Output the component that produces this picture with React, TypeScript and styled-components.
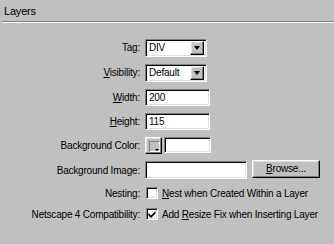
import React from "react";
import styled, { createGlobalStyle } from "styled-components";

const GlobalStyle = createGlobalStyle`
  html, body {
    margin: 0;
    padding: 0;
    background: #c0c0c0;
  }
  body {
    font-family: "Liberation Sans", Arial, sans-serif;
    font-size: 10px;
    letter-spacing: -0.2px;
    color: #000;
  }
`;

const Panel = styled.div`
  width: 334px;
  height: 244px;
  background: #c0c0c0;
  overflow: hidden;
`;

const Header = styled.div`
  height: 21px;
  padding-left: 4px;
  display: flex;
  align-items: center;
  font-size: 11px;
`;

const Divider = styled.div`
  margin-left: 2px;
  height: 1px;
  background: #808080;
  border-bottom: 1px solid #fff;
`;

const Form = styled.div`
  margin-top: 12px;
  display: grid;
  grid-template-columns: 140px 1fr;
  grid-template-rows: 25px 25px 24px 24px 24px 26px 20px 22px;
  column-gap: 5px;
  align-items: center;
`;

const Label = styled.div`
  text-align: right;
  white-space: nowrap;
`;

const Controls = styled.div<{ $gap?: number }>`
  display: flex;
  align-items: center;
  gap: ${({ $gap }) => $gap ?? 2}px;
`;

const sunken = `
  box-sizing: border-box;
  background: #fff;
  border: 1px solid;
  border-color: #808080 #fff #fff #808080;
  box-shadow: inset 1px 1px #000, inset -1px -1px #dfdfdf;
`;

const raised = `
  box-sizing: border-box;
  background: #c0c0c0;
  border: 1px solid;
  border-color: #fff #000 #000 #fff;
  box-shadow: inset -1px -1px #808080, inset 1px 1px #dfdfdf;
`;

const SelectBox = styled.div`
  ${sunken}
  width: 62px;
  height: 18px;
  display: flex;
  align-items: center;
  padding: 2px;
`;

const SelectText = styled.span`
  flex: 1;
  padding-left: 1px;
  white-space: nowrap;
  overflow: hidden;
`;

const ArrowButton = styled.div`
  ${raised}
  width: 14px;
  height: 14px;
  display: flex;
  align-items: center;
  justify-content: center;
`;

const Arrow = styled.div`
  width: 0;
  height: 0;
  border-left: 3.5px solid transparent;
  border-right: 3.5px solid transparent;
  border-top: 4px solid #000;
`;

const Field = styled.div<{ $w: number; $h: number }>`
  ${sunken}
  width: ${({ $w }) => $w}px;
  height: ${({ $h }) => $h}px;
  display: flex;
  align-items: center;
  padding-left: 3px;
`;

const Swatch = styled.div`
  ${raised}
  width: 17px;
  height: 17px;
  position: relative;
`;

const SwatchInner = styled.div`
  position: absolute;
  left: 3px;
  top: 3px;
  width: 9px;
  height: 9px;
  border: 1px solid #808080;
  border-right-color: #fff;
  border-bottom-color: #fff;
  background: #c0c0c0;
`;

const SwatchArrow = styled.div`
  position: absolute;
  right: 2px;
  bottom: 2px;
  width: 0;
  height: 0;
  border-left: 2px solid transparent;
  border-right: 2px solid transparent;
  border-top: 2px solid #000;
`;

const Button = styled.div`
  ${raised}
  width: 68px;
  height: 18px;
  display: flex;
  align-items: center;
  justify-content: center;
  margin-left: 3px;
  margin-top: -3px;
`;

const Check = styled.div`
  ${sunken}
  width: 12px;
  height: 12px;
  margin-left: 1px;
  display: flex;
  align-items: center;
  justify-content: center;
`;

const CheckLabel = styled.span`
  margin-left: 4px;
  white-space: nowrap;
`;

const U = styled.span`
  text-decoration: underline;
`;

const CheckMark = () => (
  <svg width="8" height="8" viewBox="0 0 8 8">
    <path d="M0.5 3 L3 5.5 L7.5 1 L7.5 3.5 L3 8 L0.5 5.5 Z" fill="#000" />
  </svg>
);

const App: React.FC = () => {
  return (
    <Panel>
      <GlobalStyle />
      <Header>Layers</Header>
      <Divider />
      <Form>
        <Label>Tag:</Label>
        <Controls>
          <SelectBox>
            <SelectText>DIV</SelectText>
            <ArrowButton>
              <Arrow />
            </ArrowButton>
          </SelectBox>
        </Controls>

        <Label>
          <U>V</U>isibility:
        </Label>
        <Controls>
          <SelectBox>
            <SelectText>Default</SelectText>
            <ArrowButton>
              <Arrow />
            </ArrowButton>
          </SelectBox>
        </Controls>

        <Label>
          <U>W</U>idth:
        </Label>
        <Controls>
          <Field $w={65} $h={17}>200</Field>
        </Controls>

        <Label>
          <U>H</U>eight:
        </Label>
        <Controls>
          <Field $w={65} $h={17}>115</Field>
        </Controls>

        <Label>Background Color:</Label>
        <Controls>
          <Swatch>
            <SwatchInner />
            <SwatchArrow />
          </Swatch>
          <Field $w={47} $h={16} />
        </Controls>

        <Label>Background Image:</Label>
        <Controls>
          <Field $w={102} $h={18} />
          <Button>
            <span>
              <U>B</U>rowse...
            </span>
          </Button>
        </Controls>

        <Label>Nesting:</Label>
        <Controls $gap={0}>
          <Check />
          <CheckLabel>
            <U>N</U>est when Created Within a Layer
          </CheckLabel>
        </Controls>

        <Label>Netscape 4 Compatibility:</Label>
        <Controls $gap={0}>
          <Check>
            <CheckMark />
          </Check>
          <CheckLabel>
            Add <U>R</U>esize Fix when Inserting Layer
          </CheckLabel>
        </Controls>
      </Form>
    </Panel>
  );
};

export default App;
